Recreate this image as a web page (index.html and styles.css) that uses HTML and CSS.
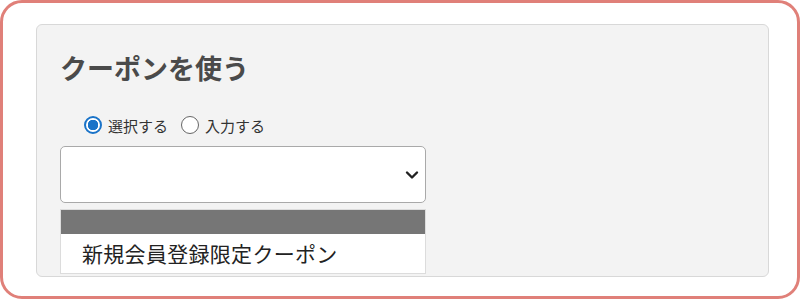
FILE: index.html
```html
<!DOCTYPE html>
<html lang="ja">
<head>
<meta charset="utf-8">
<link rel="stylesheet" href="styles.css">
</head>
<body>
<div class="frame">
  <section class="panel">
    <h2 class="title">クーポンを使う</h2>
    <div class="radios">
      <label class="radio"><span class="dot checked"></span>選択する</label>
      <label class="radio"><span class="dot"></span>入力する</label>
    </div>
    <div class="select">
      <svg class="chev" width="14" height="10" viewBox="0 0 14 10"><path d="M2 2.5 L7 7.5 L12 2.5" fill="none" stroke="#222" stroke-width="2.4" stroke-linecap="round" stroke-linejoin="round"/></svg>
    </div>
    <div class="list">
      <div class="list-head"></div>
      <div class="option">新規会員登録限定クーポン</div>
    </div>
  </section>
</div>
</body>
</html>
```
FILE: styles.css
```css
html, body { margin: 0; padding: 0; background: #fff; }
body { font-family: "Noto Sans CJK JP", "Noto Sans", sans-serif; width: 800px; height: 300px; overflow: hidden; }
.frame {
  box-sizing: border-box;
  width: 800px;
  height: 299px;
  border: 3px solid #e08079;
  border-radius: 22px;
  padding: 21px 28px 0 33px;
}
.panel {
  box-sizing: border-box;
  height: 253px;
  background: #f3f3f3;
  border: 1px solid #d8d8d8;
  border-radius: 6px;
  padding: 0 0 0 23px;
  overflow: hidden;
}
.title {
  margin: 28px 0 0 0;
  font-size: 27px;
  line-height: 30px;
  font-weight: bold;
  color: #4a4a4a;
}
.radios {
  display: flex;
  align-items: center;
  gap: 13px;
  margin: 32px 0 0 24px;
  height: 20px;
}
.radio {
  display: flex;
  align-items: center;
  gap: 6px;
  font-size: 15px;
  color: #333;
}
.dot {
  box-sizing: border-box;
  width: 18px;
  height: 18px;
  border-radius: 50%;
  border: 1.5px solid #666;
  background: #fff;
}
.dot.checked {
  border: 2px solid #1a73c8;
  background: radial-gradient(circle, #1a73c8 0 5px, #fff 5.5px);
}
.select {
  box-sizing: border-box;
  margin-top: 11px;
  width: 366px;
  height: 57px;
  background: #fff;
  border: 1px solid #a9a9a9;
  border-radius: 5px;
  display: flex;
  align-items: center;
  justify-content: flex-end;
  padding-right: 6px;
}
.list {
  box-sizing: border-box;
  margin-top: 6px;
  width: 366px;
  border: 1px solid #dcdcdc;
  background: #fff;
}
.list-head { height: 24px; background: #767676; }
.option {
  height: 39px;
  padding-left: 21px;
  font-size: 21px;
  letter-spacing: 0.3px;
  line-height: 38px;
  color: #222;
}
```
